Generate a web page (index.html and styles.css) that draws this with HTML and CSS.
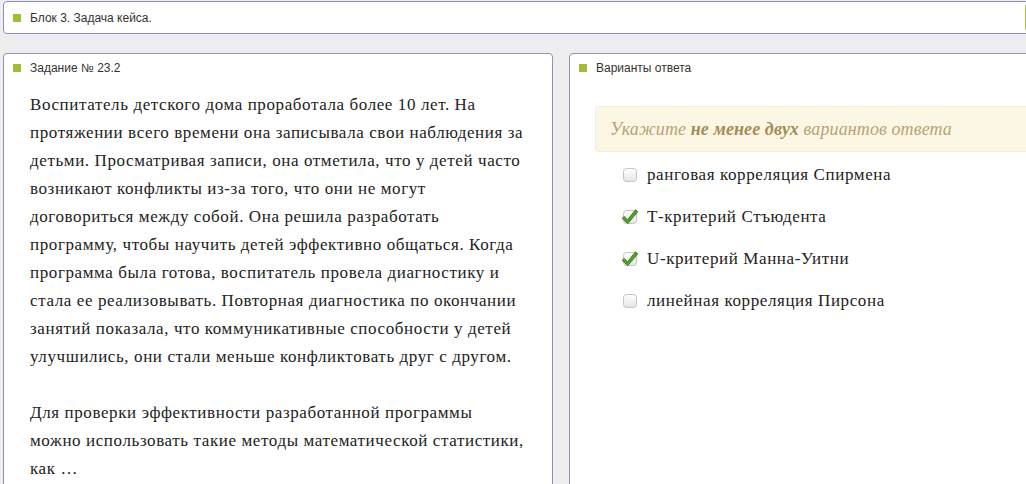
FILE: index.html
```html
<!DOCTYPE html>
<html lang="ru">
<head>
    <meta charset="UTF-8">
    <title>Блок 3. Задача кейса.</title>
    <link rel="stylesheet" href="styles.css">
</head>
<body>

<div class="page">
    <div class="block-bar">
        <span class="marker"></span>
        <span class="bar-title">Блок 3. Задача кейса.</span>
        <span class="bar-button"></span>
    </div>

    <div class="columns">
        <div class="panel task">
            <div class="panel-title"><span class="marker"></span>Задание № 23.2</div>
            <div class="task-text">
                <p>Воспитатель детского дома проработала более 10 лет. На протяжении всего времени она записывала свои наблюдения за детьми. Просматривая записи, она отметила, что у детей часто возникают конфликты из-за того, что они не могут договориться между собой. Она решила разработать программу, чтобы научить детей эффективно общаться. Когда программа была готова, воспитатель провела диагностику и стала ее реализовывать. Повторная диагностика по окончании занятий показала, что коммуникативные способности у детей улучшились, они стали меньше конфликтовать друг с другом.</p>
                <p class="question">Для проверки эффективности разработанной программы<br>можно использовать такие методы математической статистики,<br>как …</p>
            </div>
        </div>

        <div class="panel answers">
            <div class="panel-title"><span class="marker"></span>Варианты ответа</div>
            <div class="hint">Укажите <b>не менее двух</b> вариантов ответа</div>
            <ul class="options">
                <li class="option">
                    <span class="check"></span>
                    ранговая корреляция Спирмена
                </li>
                <li class="option checked">
                    <span class="check"></span>
                    Т-критерий Стъюдента
                </li>
                <li class="option checked">
                    <span class="check"></span>
                    U-критерий Манна-Уитни
                </li>
                <li class="option">
                    <span class="check"></span>
                    линейная корреляция Пирсона
                </li>
            </ul>
        </div>
    </div>
</div>

<script>
    // draw the checkbox glyphs
    const boxSvg = '<svg width="18" height="18" viewBox="0 0 18 18">' +
        '<defs><linearGradient id="g" x1="0" y1="0" x2="0" y2="1">' +
        '<stop offset="0" stop-color="#ffffff"/><stop offset="1" stop-color="#e4e4e4"/></linearGradient></defs>' +
        '<rect x="2.5" y="3.5" width="13" height="13" rx="3" fill="url(#g)" stroke="#c4c4c4"/>';
    const tickSvg = '<path d="M3 9.4 L6.6 12.8 L14.4 2.8 L16.8 4.8 L6.8 16.6 L1.2 11.4 Z" fill="#52a325" stroke="#2e6b12" stroke-width="0.8" stroke-linejoin="round"/>';

    document.querySelectorAll('.option').forEach(option => {
        const box = option.querySelector('.check');
        const draw = () => {
            box.innerHTML = boxSvg + (option.classList.contains('checked') ? tickSvg : '') + '</svg>';
        };
        draw();
        option.addEventListener('click', () => {
            option.classList.toggle('checked');
            draw();
        });
    });
</script>

</body>
</html>
```

FILE: styles.css
```css
html {
    overflow: hidden;
}
body {
    margin: 0;
    background-color: #eeeef0;
    font-family: "Liberation Sans", Arial, sans-serif;
    color: #333;
}
.page {
    width: 1060px;
    height: 484px;
    padding: 1px 0 0 3px;
    overflow: hidden;
}
.marker {
    display: inline-block;
    width: 8px;
    height: 8px;
    background-color: #a3bb3a;
    margin-right: 9px;
    flex-shrink: 0;
}
.block-bar {
    display: flex;
    align-items: center;
    height: 31px;
    padding-left: 9px;
    background-color: #fff;
    border: 1px solid #8f92b6;
    border-radius: 4px;
    font-size: 12px;
}
.bar-title {
    flex: 1;
}
.bar-button {
    width: 37px;
    height: 27px;
    margin-left: 10px;
    background-color: #a9c23f;
    border-radius: 3px 0 0 3px;
}
.columns {
    display: grid;
    grid-template-columns: 550px 1fr;
    gap: 16px;
    margin-top: 19px;
}
.panel {
    background-color: #fff;
    border: 1px solid #8f92b6;
    border-radius: 4px;
    height: 460px;
}
.panel-title {
    display: flex;
    align-items: center;
    padding: 7px 0 0 9px;
    height: 14px;
    font-size: 12px;
    line-height: 14px;
}
.task-text {
    padding: 16px 24px 0 26px;
    font-family: "Liberation Serif", "Times New Roman", serif;
    font-size: 17px;
    letter-spacing: 0.6px;
    line-height: 28px;
    color: #222;
}
.task-text p {
    margin: 0 0 28px;
}
.task-text .question {
    margin-right: -12px;
}
.hint {
    margin: 31px 0 0 25px;
    height: 44px;
    line-height: 44px;
    padding-left: 14px;
    background-color: #fcf7e4;
    border: 1px solid #f5edd6;
    border-right: none;
    border-radius: 4px 0 0 4px;
    font-family: "Liberation Serif", "Times New Roman", serif;
    font-style: italic;
    font-size: 18px;
    letter-spacing: 0.1px;
    color: #b9a274;
}
.hint b {
    color: #a48b56;
}
.options {
    list-style: none;
    margin: 2px 0 0 51px;
    padding: 0;
}
.option {
    display: flex;
    align-items: center;
    height: 42px;
    font-family: "Liberation Serif", "Times New Roman", serif;
    font-size: 17px;
    letter-spacing: 0.6px;
    color: #222;
    cursor: pointer;
}
.check {
    width: 18px;
    height: 18px;
    margin-right: 8px;
    margin-top: -2px;
}
.check svg {
    display: block;
}
```
